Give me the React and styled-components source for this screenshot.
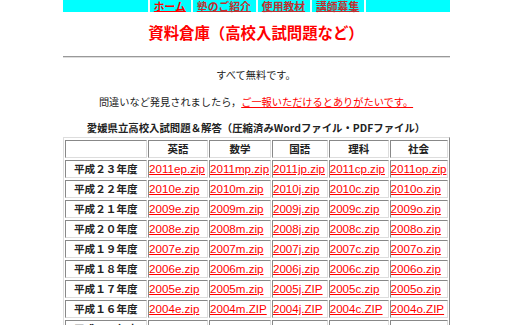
import React from "react";
import styled, { createGlobalStyle } from "styled-components";

const RED = "#ff0000";
const VISITED = "#c03030";
const TEXT = "#222222";
const JP = `"Noto Sans CJK JP", "Noto Sans", sans-serif`;
const LATIN = `"Liberation Sans", "Noto Sans CJK JP", sans-serif`;

const GlobalStyle = createGlobalStyle`
  html, body {
    margin: 0;
    padding: 0;
    background: #ffffff;
  }
  body {
    font-family: ${JP};
    color: ${TEXT};
    overflow: hidden;
  }
`;

const navItems = [
  { label: "ホーム", visited: false },
  { label: "塾のご紹介", visited: true },
  { label: "使用教材", visited: true },
  { label: "講師募集", visited: true },
];

const subjects = ["英語", "数学", "国語", "理科", "社会"];
const colWidths = [80, 58, 60, 54, 58, 56];

const years = [
  { label: "平成２３年度", files: ["2011ep.zip", "2011mp.zip", "2011jp.zip", "2011cp.zip", "2011op.zip"] },
  { label: "平成２２年度", files: ["2010e.zip", "2010m.zip", "2010j.zip", "2010c.zip", "2010o.zip"] },
  { label: "平成２１年度", files: ["2009e.zip", "2009m.zip", "2009j.zip", "2009c.zip", "2009o.zip"] },
  { label: "平成２０年度", files: ["2008e.zip", "2008m.zip", "2008j.zip", "2008c.zip", "2008o.zip"] },
  { label: "平成１９年度", files: ["2007e.zip", "2007m.zip", "2007j.zip", "2007c.zip", "2007o.zip"] },
  { label: "平成１８年度", files: ["2006e.zip", "2006m.zip", "2006j.zip", "2006c.zip", "2006o.zip"] },
  { label: "平成１７年度", files: ["2005e.zip", "2005m.zip", "2005j.ZIP", "2005c.zip", "2005o.zip"] },
  { label: "平成１６年度", files: ["2004e.zip", "2004m.ZIP", "2004j.ZIP", "2004c.ZIP", "2004o.ZIP"] },
  { label: "平成１５年度", files: ["2003e.zip", "2003m.zip", "2003j.zip", "2003c.zip", "2003o.zip"] },
];

const App = () => {
  return (
    <>
      <GlobalStyle />
      <Page>
        <NavBar>
          <NavList>
            {navItems.map((item) => (
              <NavItem key={item.label}>
                <NavLink href="#" $visited={item.visited}>{item.label}</NavLink>
              </NavItem>
            ))}
          </NavList>
        </NavBar>
        <Title>資料倉庫（高校入試問題など）</Title>
        <Rule />
        <Paragraph>すべて無料です。</Paragraph>
        <Paragraph $gap={11}>
          問違いなど発見されましたら，<TextLink href="#">ご一報いただけるとありがたいです。</TextLink>
        </Paragraph>
        <Caption>愛媛県立高校入試問題＆解答（圧縮済みWordファイル・PDFファイル）</Caption>
        <Table>
          <thead>
            <tr>
              <HeadCell style={{ width: colWidths[0] }} />
              {subjects.map((s, i) => (
                <HeadCell key={s} style={{ width: colWidths[i + 1] }}>{s}</HeadCell>
              ))}
            </tr>
          </thead>
          <tbody>
            {years.map((y) => (
              <tr key={y.label}>
                <LabelCell>{y.label}</LabelCell>
                {y.files.map((f) => (
                  <FileCell key={f}>
                    <FileLink href="#">{f}</FileLink>
                  </FileCell>
                ))}
              </tr>
            ))}
          </tbody>
        </Table>
      </Page>
    </>
  );
};

export default App;

const Page = styled.div`
  width: 387px;
  margin: 0 auto;
`;

const NavBar = styled.nav`
  background: #00ffff;
  height: 12px;
  display: flex;
  justify-content: center;
  padding-left: 2px;
`;

const NavList = styled.ul`
  display: flex;
  margin: 0;
  padding: 0;
  list-style: none;
  border-right: 2px solid #f4ffff;
`;

const NavItem = styled.li`
  border-left: 2px solid #f4ffff;
  padding: 0 5px 0 4px;
  height: 12px;
`;

const NavLink = styled.a`
  display: block;
  font-family: ${JP};
  font-weight: 700;
  font-size: 10.8px;
  line-height: 12px;
  color: ${({ $visited }) => ($visited ? VISITED : RED)};
  text-decoration: underline;
  text-underline-offset: 0px;
`;

const Title = styled.h1`
  margin: 10px 0 0;
  text-align: center;
  font-family: ${JP};
  font-weight: 700;
  font-size: 15.4px;
  line-height: 20px;
  color: ${RED};
`;

const Rule = styled.hr`
  margin: 14px 0 0;
  border: 0;
  border-top: 1px solid #999999;
  border-bottom: 1px solid #dddddd;
  height: 0;
`;

const Paragraph = styled.p`
  margin: ${({ $gap }) => $gap ?? 9}px 0 0;
  text-align: center;
  font-size: 10.2px;
  line-height: 16px;
  color: ${TEXT};
`;

const TextLink = styled.a`
  color: ${RED};
  text-decoration: underline;
`;

const Caption = styled.h2`
  margin: 10px 0 0;
  text-align: center;
  font-family: ${JP};
  font-weight: 700;
  font-size: 10.4px;
  line-height: 16px;
  color: ${TEXT};
`;

const Table = styled.table`
  margin-top: 1px;
  width: 387px;
  border-collapse: separate;
  border-spacing: 1px 2px;
  border: 1px solid;
  border-color: #dddddd #888888 #888888 #dddddd;
  table-layout: fixed;
`;

const Cell = styled.td`
  box-sizing: border-box;
  border: 1px solid;
  border-color: #888888 #dddddd #dddddd #888888;
  padding: 0;
  height: 18px;
  font-size: 11px;
  line-height: 16px;
  white-space: nowrap;
  overflow: hidden;
  vertical-align: middle;
`;

const HeadCell = styled(Cell).attrs({ as: "th" })`
  font-family: ${JP};
  font-weight: 700;
  font-size: 10.5px;
  text-align: center;
  color: ${TEXT};
`;

const LabelCell = styled(Cell)`
  font-family: ${JP};
  font-weight: 700;
  font-size: 10.6px;
  text-align: center;
  color: ${TEXT};
`;

const FileCell = styled(Cell)`
  text-align: left;
`;

const FileLink = styled.a`
  display: block;
  height: 16px;
  font-family: ${LATIN};
  font-size: 11.6px;
  line-height: 16px;
  color: ${RED};
  text-decoration: underline;
`;
